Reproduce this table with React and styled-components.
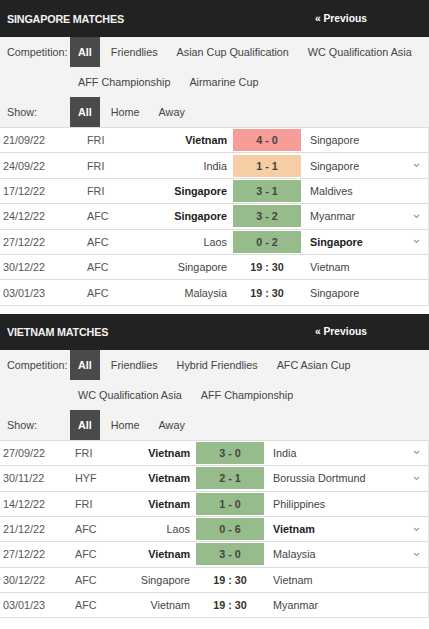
import React from "react";
import styled, { createGlobalStyle } from "styled-components";

const Global = createGlobalStyle`
  html, body { margin: 0; padding: 0; background: #fff; }
  body { font-family: "Liberation Sans", Arial, sans-serif; font-size: 10.8px; color: #444; }
`;

const Page = styled.div`
  width: 429px;
  display: flex;
  flex-direction: column;
  gap: 8px;
`;

const Section = styled.section`
  display: flex;
  flex-direction: column;
`;

const Header = styled.div`
  height: ${(p) => p.$h}px;
  background: #222;
  display: flex;
  align-items: center;
  justify-content: space-between;
  padding: 0 62px 0 7px;
`;

const Title = styled.h2`
  margin: 0;
  font-size: 10.8px;
  font-weight: bold;
  color: #f2f2f2;
  letter-spacing: -0.2px;
`;

const Prev = styled.a`
  font-size: 10.3px;
  font-weight: bold;
  color: #fff;
  text-decoration: none;
`;

const Filters = styled.div`
  background: #f3f3f3;
  display: flex;
  flex-direction: column;
`;

const FilterRow = styled.div`
  display: grid;
  grid-template-columns: 70px 1fr;
`;

const Label = styled.span`
  height: 30px;
  line-height: 30px;
  padding-left: 7px;
  color: #444;
`;

const Options = styled.div`
  display: flex;
  flex-wrap: wrap;
  column-gap: 3px;
`;

const Option = styled.span`
  height: 30px;
  line-height: 30px;
  padding: 0 8px;
  white-space: nowrap;
  color: ${(p) => (p.$active ? "#fff" : "#444")};
  background: ${(p) => (p.$active ? "#4a4a4a" : "transparent")};
  font-weight: ${(p) => (p.$active ? "bold" : "normal")};
`;

const Table = styled.div`
  border-top: 1px solid #dcdcdc;
  border-right: 1px solid #e6e6e6;
  background: #fff;
`;

const Row = styled.div`
  display: grid;
  grid-template-columns: ${(p) => p.$cols};
  height: 24.4px;
  align-items: center;
  border-bottom: 1px solid #dcdcdc;
`;

const Cell = styled.span`
  white-space: nowrap;
  overflow: hidden;
  padding-left: 3px;
  color: #555;
`;

const Team = styled.span`
  white-space: nowrap;
  overflow: hidden;
  text-align: ${(p) => (p.$right ? "right" : "left")};
  padding: ${(p) => (p.$right ? "0 3px 0 0" : "0 0 0 6px")};
  font-weight: ${(p) => (p.$bold ? "bold" : "normal")};
  color: ${(p) => (p.$bold ? "#222" : "#444")};
`;

const scoreBg = { L: "#f59c96", D: "#f6cea6", W: "#96bc8c" };

const Score = styled.span`
  margin: 0 3px;
  height: 22px;
  line-height: 22px;
  text-align: center;
  font-weight: bold;
  color: ${(p) => (p.$res ? "#444" : "#333")};
  background: ${(p) => (p.$res ? scoreBg[p.$res] : "transparent")};
`;

const Chev = styled.span`
  display: flex;
  justify-content: center;
  align-items: center;
`;

const Chevron = () => (
  <svg width="7" height="5" viewBox="0 0 7 5">
    <polyline points="1,1 3.5,3.5 6,1" fill="none" stroke="#9a9a9a" strokeWidth="1.1" />
  </svg>
);

const MatchSection = ({ title, comps, cols, matches, headerHeight }) => (
  <Section>
    <Header $h={headerHeight}>
      <Title>{title}</Title>
      <Prev href="#">« Previous</Prev>
    </Header>
    <Filters>
      <FilterRow>
        <Label>Competition:</Label>
        <Options>
          {comps.map((c, i) => (
            <Option key={c} $active={i === 0}>{c}</Option>
          ))}
        </Options>
      </FilterRow>
      <FilterRow>
        <Label>Show:</Label>
        <Options>
          <Option $active>All</Option>
          <Option>Home</Option>
          <Option>Away</Option>
        </Options>
      </FilterRow>
    </Filters>
    <Table>
      {matches.map((m, i) => (
        <Row key={i} $cols={cols}>
          <Cell>{m[0]}</Cell>
          <Cell>{m[1]}</Cell>
          <Team $right $bold={m[6] === "h"}>{m[2]}</Team>
          <Score $res={m[4]}>{m[3]}</Score>
          <Team $bold={m[6] === "a"}>{m[5]}</Team>
          <Chev>{m[7] ? <Chevron /> : null}</Chev>
        </Row>
      ))}
    </Table>
  </Section>
);

const sgMatches = [
  ["21/09/22", "FRI", "Vietnam", "4 - 0", "L", "Singapore", "h", false],
  ["24/09/22", "FRI", "India", "1 - 1", "D", "Singapore", "", true],
  ["17/12/22", "FRI", "Singapore", "3 - 1", "W", "Maldives", "h", false],
  ["24/12/22", "AFC", "Singapore", "3 - 2", "W", "Myanmar", "h", true],
  ["27/12/22", "AFC", "Laos", "0 - 2", "W", "Singapore", "a", true],
  ["30/12/22", "AFC", "Singapore", "19 : 30", null, "Vietnam", "", false],
  ["03/01/23", "AFC", "Malaysia", "19 : 30", null, "Singapore", "", false],
];

const vnMatches = [
  ["27/09/22", "FRI", "Vietnam", "3 - 0", "W", "India", "h", true],
  ["30/11/22", "HYF", "Vietnam", "2 - 1", "W", "Borussia Dortmund", "h", true],
  ["14/12/22", "FRI", "Vietnam", "1 - 0", "W", "Philippines", "h", false],
  ["21/12/22", "AFC", "Laos", "0 - 6", "W", "Vietnam", "a", true],
  ["27/12/22", "AFC", "Vietnam", "3 - 0", "W", "Malaysia", "h", true],
  ["30/12/22", "AFC", "Singapore", "19 : 30", null, "Vietnam", "", false],
  ["03/01/23", "AFC", "Vietnam", "19 : 30", null, "Myanmar", "", false],
];

export default function App() {
  return (
    <>
      <Global />
      <Page>
        <MatchSection
          title="SINGAPORE MATCHES"
          headerHeight={37}
          comps={["All", "Friendlies", "Asian Cup Qualification", "WC Qualification Asia", "AFF Championship", "Airmarine Cup"]}
          cols="84px 60px 86px 74px 1fr 24px"
          matches={sgMatches}
        />
        <MatchSection
          title="VIETNAM MATCHES"
          headerHeight={36}
          comps={["All", "Friendlies", "Hybrid Friendlies", "AFC Asian Cup", "WC Qualification Asia", "AFF Championship"]}
          cols="72px 40px 81px 74px 1fr 24px"
          matches={vnMatches}
        />
      </Page>
    </>
  );
}
